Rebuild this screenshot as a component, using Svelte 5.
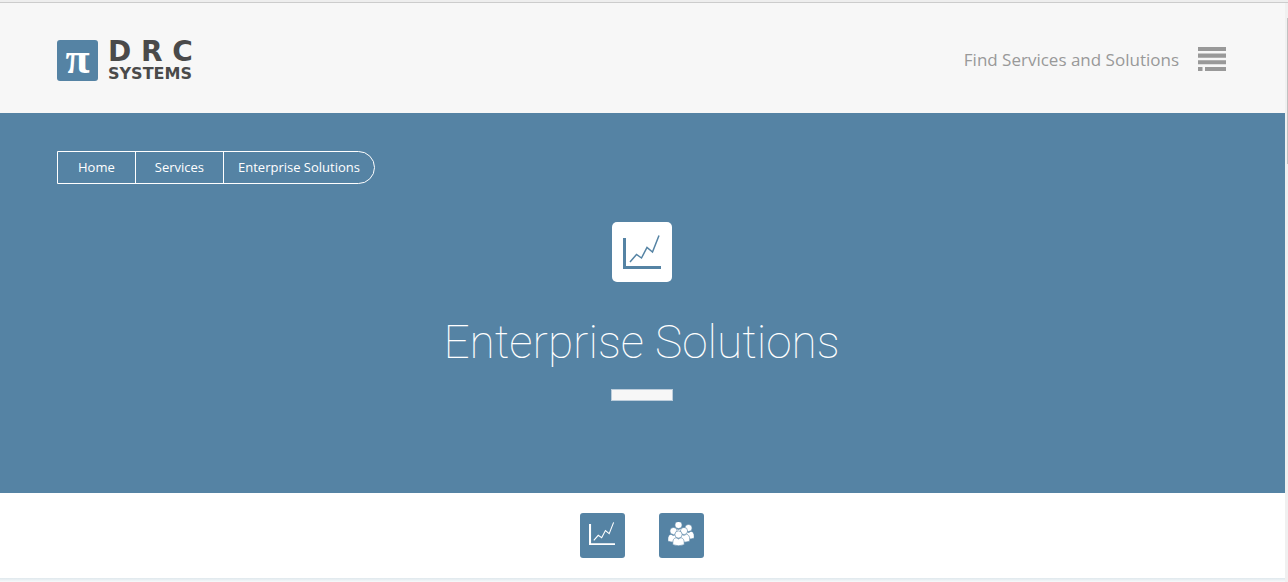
<script>
  const crumbs = ["Home", "Services", "Enterprise Solutions"];
</script>

{#snippet chart(thin)}
  <svg viewBox="0 0 38 34" fill="none" stroke="currentColor" aria-hidden="true">
    <path d="M1.5 3v29.5H38" stroke-width="3" />
    <path d="M7 27l6.5-7.5 5 3.5 5.5-10.5 5.5 4.5L36 0.5" stroke-width={thin} />
  </svg>
{/snippet}

{#snippet person()}
  <circle cx="0" cy="-5" r="3.6" />
  <path d="M-2.5-1.8Q0 0.8 2.5-1.8Q5.7-1.2 5.7 3.5V5.2Q0 7.4-5.7 5.2V3.5Q-5.7-1.2-2.5-1.8Z" />
{/snippet}

<div class="edge"></div>
<div class="frame">
  <div class="page">
    <header>
      <a class="logo" href="/">
        <span class="mark">π</span>
        <span class="name">
          <span class="drc">D R C</span>
          <span class="systems">SYSTEMS</span>
        </span>
      </a>
      <button class="finder">
        Find Services and Solutions
        <svg width="28" height="26" viewBox="0 0 28 26" fill="currentColor" aria-hidden="true">
          <path d="M0 0h28v4H0zM0 6.5h28v4.2H0zM0 13.3h28v4H0zM0 20h4.500v4H0zM7 20h21v4H7z" />
        </svg>
      </button>
    </header>

    <section class="hero">
      <nav aria-label="Breadcrumb">
        {#each crumbs as crumb}
          <a href="/">{crumb}</a>
        {/each}
      </nav>
      <div class="badge">{@render chart(1.5)}</div>
      <h1>Enterprise Solutions</h1>
      <div class="bar"></div>
    </section>

    <div class="tabs">
      <button aria-label="Enterprise Solutions">{@render chart(1.6)}</button>
      <button aria-label="Community">
        <svg viewBox="0 0 26 24" fill="currentColor" stroke="#5583a4" stroke-width="0.6" aria-hidden="true">
          <g transform="translate(10.5 8)">{@render person()}</g>
          <g transform="translate(20.5 11)">{@render person()}</g>
          <g transform="translate(5.5 14)">{@render person()}</g>
          <g transform="translate(16 14)">{@render person()}</g>
          <g transform="translate(10.5 17.5)">{@render person()}</g>
        </svg>
      </button>
    </div>
    <div class="next"></div>
  </div>
  <div class="scroll"><div class="thumb"></div></div>
</div>

<style>
  :global(body) {
    background: #fff;
    font-family: "Open Sans", sans-serif;
  }
  .edge {
    height: 2px;
    background: #eee;
    border-bottom: 1px solid #ccc;
  }
  .frame {
    display: flex;
  }
  .page {
    flex: 1;
  }
  header {
    display: flex;
    align-items: center;
    justify-content: space-between;
    box-sizing: border-box;
    height: 110px;
    padding: 4px 59px 0 57px;
    background: #f7f7f7;
  }
  .logo {
    display: flex;
    align-items: center;
    gap: 10px;
    color: #4a4a4a;
    text-decoration: none;
  }
  .mark {
    width: 41px;
    height: 41px;
    border-radius: 3px;
    background: #5583a4;
    color: #fff;
    font: bold 44px/38px "Liberation Serif", serif;
    text-align: center;
  }
  .name {
    display: flex;
    flex-direction: column;
    font-family: "DejaVu Sans", sans-serif;
    font-weight: bold;
  }
  .drc {
    font-size: 28px;
    line-height: 28px;
  }
  .systems {
    font-size: 16px;
    line-height: 16px;
  }
  button {
    padding: 0;
    border: none;
    cursor: pointer;
  }
  .finder {
    display: flex;
    align-items: center;
    gap: 19px;
    background: none;
    color: #999;
    font: 17px/24px "Open Sans", sans-serif;
  }
  .hero {
    display: flex;
    flex-direction: column;
    align-items: center;
    box-sizing: border-box;
    height: 380px;
    padding: 38px 59px 0 57px;
    background: #5583a4;
    color: #fff;
  }
  nav {
    display: flex;
    align-self: flex-start;
    border: 1px solid #fff;
    border-radius: 0 17px 17px 0;
  }
  nav a {
    padding: 0 20px;
    color: #fff;
    font-size: 13px;
    line-height: 31px;
    text-decoration: none;
  }
  nav a + a {
    padding: 0 19px;
    border-left: 1px solid #fff;
  }
  nav a:last-child {
    padding: 0 14px;
  }
  .badge {
    display: flex;
    align-items: center;
    justify-content: center;
    width: 60px;
    height: 60px;
    margin-top: 38px;
    border-radius: 5px;
    background: #fff;
    color: #5583a4;
  }
  .badge svg {
    width: 38px;
  }
  h1 {
    margin: 26px 0 0;
    font: 100 46px/68px Roboto, sans-serif;
  }
  .bar {
    width: 60px;
    height: 10px;
    margin-top: 13px;
    border: 1px solid #bccddb;
    background: #f7f7f7;
  }
  .tabs {
    display: flex;
    justify-content: center;
    gap: 34px;
    padding: 20px 2px 20px 0;
  }
  .tabs button {
    display: flex;
    align-items: center;
    justify-content: center;
    width: 45px;
    height: 45px;
    padding-bottom: 4px;
    border-radius: 3px;
    background: #5583a4;
    color: #fff;
  }
  .tabs svg {
    width: 26px;
  }
  .next {
    height: 4px;
    background: linear-gradient(#dfe8ed, #f7f9fa);
  }
  .scroll {
    display: flex;
    justify-content: flex-end;
    width: 3px;
    padding-top: 15px;
    box-sizing: border-box;
    background: #f0f0f0;
  }
  .thumb {
    width: 1px;
    height: 146px;
    background: #c1c1c1;
  }
</style>
